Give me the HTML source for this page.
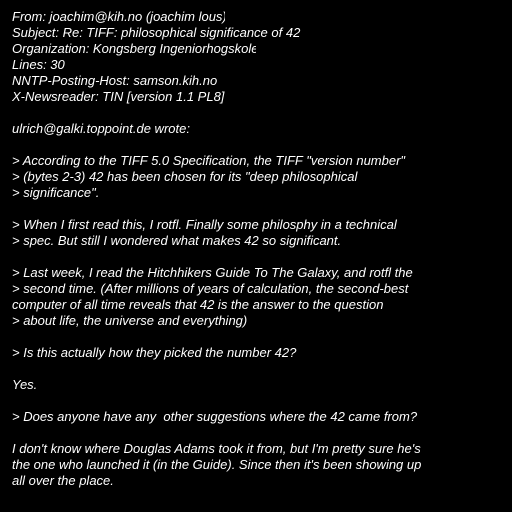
<!DOCTYPE html>
<html><head><style>
html,body{margin:0;padding:0;background:#000;width:512px;height:512px;overflow:hidden}
.t{position:absolute;left:12px;color:#fff;font:italic 13px/16px "Liberation Sans",sans-serif;white-space:pre}
.c{overflow:hidden}
</style></head><body>
<div class="t c" style="top:9px;width:213px">From: joachim@kih.no (joachim lous)</div>
<div class="t" style="top:25px">Subject: Re: TIFF: philosophical significance of 42</div>
<div class="t c" style="top:41px;width:244px">Organization: Kongsberg Ingeniorhogskole</div>
<div class="t" style="top:57px">Lines: 30</div>
<div class="t" style="top:73px">NNTP-Posting-Host: samson.kih.no</div>
<div class="t" style="top:89px">X-Newsreader: TIN [version 1.1 PL8]</div>
<div class="t" style="top:121px">ulrich@galki.toppoint.de wrote:</div>
<div class="t" style="top:153px">&gt; According to the TIFF 5.0 Specification, the TIFF "version number"</div>
<div class="t" style="top:169px">&gt; (bytes 2-3) 42 has been chosen for its "deep philosophical</div>
<div class="t" style="top:185px">&gt; significance".</div>
<div class="t" style="top:217px">&gt; When I first read this, I rotfl. Finally some philosphy in a technical</div>
<div class="t" style="top:233px">&gt; spec. But still I wondered what makes 42 so significant.</div>
<div class="t" style="top:265px">&gt; Last week, I read the Hitchhikers Guide To The Galaxy, and rotfl the</div>
<div class="t" style="top:281px">&gt; second time. (After millions of years of calculation, the second-best</div>
<div class="t" style="top:297px">computer of all time reveals that 42 is the answer to the question</div>
<div class="t" style="top:313px">&gt; about life, the universe and everything)</div>
<div class="t" style="top:345px">&gt; Is this actually how they picked the number 42?</div>
<div class="t" style="top:377px">Yes.</div>
<div class="t" style="top:409px">&gt; Does anyone have any  other suggestions where the 42 came from?</div>
<div class="t" style="top:441px">I don't know where Douglas Adams took it from, but I'm pretty sure he's</div>
<div class="t" style="top:457px">the one who launched it (in the Guide). Since then it's been showing up</div>
<div class="t" style="top:473px">all over the place.</div>
</body></html>
